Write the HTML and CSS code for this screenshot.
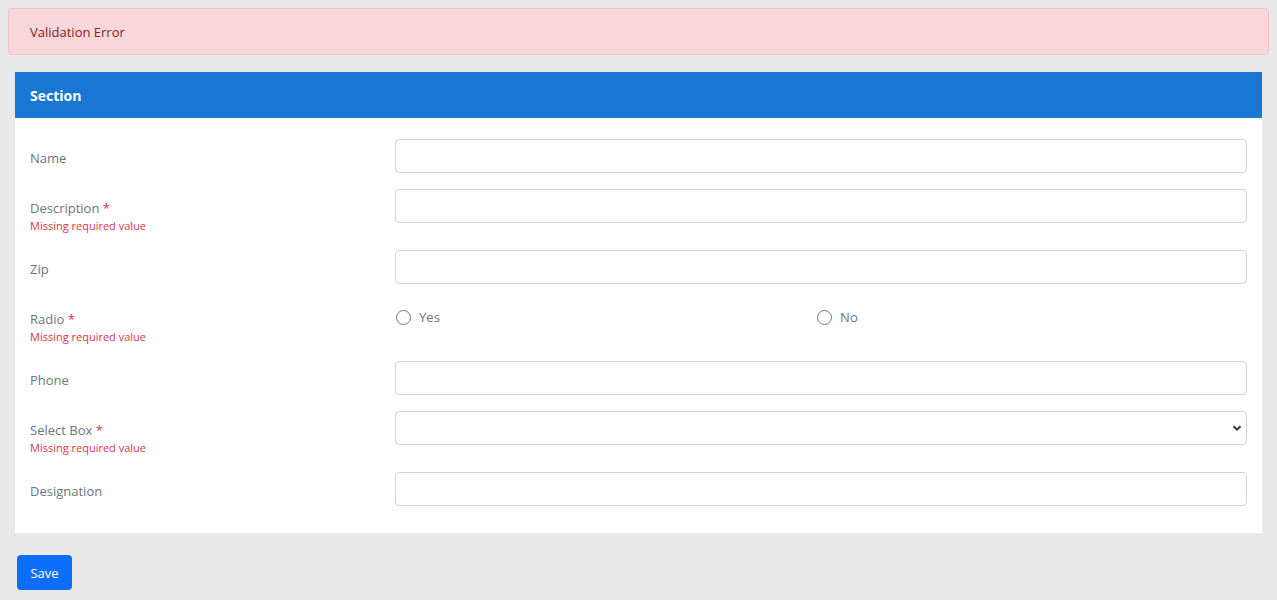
FILE: index.html
```html
<!DOCTYPE html>
<html>
<head>
<meta charset="utf-8">
<link rel="stylesheet" href="styles.css">
</head>
<body>
<div class="alert">Validation Error</div>
<div class="card">
  <div class="card-header">Section</div>
  <div class="card-body">
    <div class="row">
      <div class="label-col"><div class="label">Name</div></div>
      <div class="field-col"><input class="input" type="text"></div>
    </div>
    <div class="row">
      <div class="label-col"><div class="label">Description <span class="req">*</span></div><div class="err">Missing required value</div></div>
      <div class="field-col"><input class="input" type="text"></div>
    </div>
    <div class="row">
      <div class="label-col"><div class="label">Zip</div></div>
      <div class="field-col"><input class="input" type="text"></div>
    </div>
    <div class="row">
      <div class="label-col"><div class="label">Radio <span class="req">*</span></div><div class="err">Missing required value</div></div>
      <div class="field-col radios">
        <label class="radio radio-first"><span class="circle"></span>Yes</label>
        <label class="radio"><span class="circle"></span>No</label>
      </div>
    </div>
    <div class="row">
      <div class="label-col"><div class="label">Phone</div></div>
      <div class="field-col"><input class="input" type="text"></div>
    </div>
    <div class="row">
      <div class="label-col"><div class="label">Select Box <span class="req">*</span></div><div class="err">Missing required value</div></div>
      <div class="field-col">
        <div class="select">
          <svg class="chev" width="10" height="8" viewBox="0 0 10 8"><path d="M1.5 2.2 L5 5.6 L8.5 2.2" fill="none" stroke="#343a40" stroke-width="2"/></svg>
        </div>
      </div>
    </div>
    <div class="row last">
      <div class="label-col"><div class="label">Designation</div></div>
      <div class="field-col"><input class="input" type="text"></div>
    </div>
  </div>
</div>
<button class="btn">Save</button>
</body>
</html>
```
FILE: styles.css
```css
html, body { margin: 0; padding: 0; }
body {
  background: #e9e9e9;
  padding: 8px;
  font-family: "Open Sans", "Noto Sans", sans-serif;
  font-size: 13px;
  color: #212529;
}
.alert {
  background: #f8d7da;
  border: 1px solid #f5c2c7;
  border-radius: 4px;
  color: #842029;
  box-sizing: border-box;
  height: 47px;
  padding: 0 21px;
  display: flex;
  align-items: center;
  font-size: 13px;
}
.card {
  margin: 17px 7px 0 7px;
  background: #fff;
}
.card-header {
  background: #1976d2;
  color: #fff;
  font-weight: 700;
  font-size: 14px;
  height: 46px;
  display: flex;
  align-items: center;
  padding: 0 15px;
}
.card-body {
  padding: 21px 15px 27px 15px;
}
.row {
  display: grid;
  grid-template-columns: 30% 70%;
  margin-bottom: 16px;
}
.row.last { margin-bottom: 0; }
.label-col { padding-top: 9px; }
.label {
  color: #6c757d;
  font-size: 13px;
  line-height: 20px;
}
.req { color: #dc3545; }
.err {
  color: #dc3545;
  font-size: 11px;
  line-height: 16px;
}
.input, .select {
  display: block;
  box-sizing: border-box;
  width: 100%;
  height: 34px;
  border: 1px solid #ced4da;
  border-radius: 4px;
  background: #fff;
  margin: 0;
  padding: 0 12px;
  font: inherit;
}
.select {
  display: flex;
  align-items: center;
  justify-content: flex-end;
  padding-right: 4px;
}
.radios {
  display: flex;
  align-items: flex-start;
  padding-top: 8px;
}
.radio {
  display: flex;
  align-items: center;
  color: #6c757d;
  font-size: 13px;
  line-height: 18px;
}
.radio-first { width: 421px; padding-left: 1px; }
.circle {
  width: 13px;
  height: 13px;
  border: 1px solid #767676;
  border-radius: 50%;
  margin-right: 8px;
  background: #fff;
}
.btn {
  margin: 22px 0 0 9px;
  background: #0d6efd;
  color: #fff;
  border: none;
  border-radius: 4px;
  height: 35px;
  width: 55px;
  font-family: "Open Sans", "Noto Sans", sans-serif;
  font-size: 13px;
  padding: 0;
}
```
